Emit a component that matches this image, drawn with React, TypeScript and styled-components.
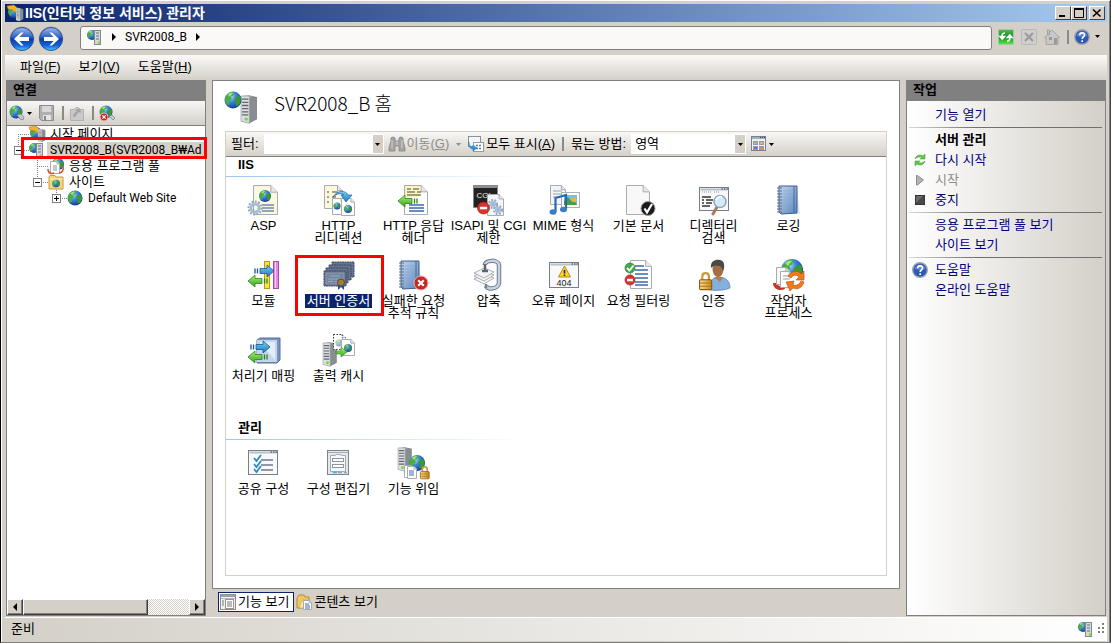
import React from "react";
import styled, { createGlobalStyle } from "styled-components";

const FACE = "#d4d0c8";
const NAVY = "#0a246a";
const RULE = "#808080";

const GlobalStyle = createGlobalStyle`
  *, *::before, *::after { box-sizing: border-box; }
  body {
    margin: 0;
    background: ${FACE};
    color: #000;
    font: 13px/16px "Liberation Sans", "Noto Sans CJK KR", sans-serif;
  }
  button, input, select { font: inherit; color: inherit; margin: 0; padding: 0; border: 0; background: none; }
  h1, h2, h3, ul { margin: 0; padding: 0; font-size: inherit; list-style: none; }
  svg { display: block; flex: none; overflow: visible; }
`;

/* ---------- drawing primitives ---------- */

const DefsSvg = styled.svg`
  position: absolute;
`;

const Defs = () => (
  <DefsSvg width="0" height="0" aria-hidden="true">
    <defs>
      <radialGradient id="sea" cx="0.35" cy="0.3" r="0.8">
        <stop offset="0" stopColor="#b8e4ff" />
        <stop offset="0.4" stopColor="#3c86dc" />
        <stop offset="1" stopColor="#0b2f8c" />
      </radialGradient>
      <linearGradient id="steel" x1="0" x2="1">
        <stop offset="0" stopColor="#e8eaec" />
        <stop offset="0.5" stopColor="#a9adb2" />
        <stop offset="1" stopColor="#5c6166" />
      </linearGradient>
      <linearGradient id="orb" x1="0" x2="0" y1="0" y2="1">
        <stop offset="0" stopColor="#9db9e6" />
        <stop offset="0.42" stopColor="#2f62c4" />
        <stop offset="0.5" stopColor="#0a3aa4" />
        <stop offset="0.8" stopColor="#1568d8" />
        <stop offset="1" stopColor="#58d0ff" />
      </linearGradient>
      <linearGradient id="rim" x1="0" x2="0" y1="0" y2="1">
        <stop offset="0" stopColor="#a8a49c" />
        <stop offset="1" stopColor="#dedbd4" />
      </linearGradient>
      <linearGradient id="green" x1="0" x2="0" y1="0" y2="1">
        <stop offset="0" stopColor="#b4ee7c" />
        <stop offset="1" stopColor="#2ca41c" />
      </linearGradient>
      <linearGradient id="blue" x1="0" x2="0" y1="0" y2="1">
        <stop offset="0" stopColor="#7cd0f8" />
        <stop offset="1" stopColor="#1678c0" />
      </linearGradient>
      <linearGradient id="gold" x1="0" x2="1">
        <stop offset="0" stopColor="#ffe08c" />
        <stop offset="1" stopColor="#c8861c" />
      </linearGradient>
      <linearGradient id="book" x1="0" x2="1" y1="0" y2="1">
        <stop offset="0" stopColor="#c2d6ee" />
        <stop offset="1" stopColor="#5a84bc" />
      </linearGradient>
      <linearGradient id="refresh" x1="0" x2="0" y1="0" y2="1">
        <stop offset="0" stopColor="#58b858" />
        <stop offset="0.5" stopColor="#109018" />
        <stop offset="1" stopColor="#50f040" />
      </linearGradient>
    </defs>
  </DefsSvg>
);

const Globe = ({ x, y, r }: { x: number; y: number; r: number }) => (
  <g transform={`translate(${x} ${y}) scale(${r / 8})`}>
    <circle r="8" fill="url(#sea)" />
    <path d="M-7-3C-5-7-1-8 1-7L0-4-2-3-1-1-4 1-3 4-5 5C-7 3-8 0-7-3Z" fill="#4cae3a" />
    <path d="M2-2 5-4 7-3C8 0 7 4 4 6L2 4 3 1 1 0Z" fill="#3a9a30" />
    <path d="M-5-5C-3-7-1-7 0-6.500L-3-3Z" fill="#b8ec9c" opacity="0.8" />
  </g>
);

const Page = ({ x, y, w, h, fill = "#fff", dash }: { x: number; y: number; w: number; h: number; fill?: string; dash?: boolean }) => {
  const f = w / 3.6;
  return (
    <g stroke={dash ? "#333" : "#a8acb0"} strokeDasharray={dash ? "1.500 1.500" : undefined}>
      <path d={`M${x} ${y}H${x + w - f}L${x + w} ${y + f}V${y + h}H${x}Z`} fill={fill} />
      <path d={`M${x + w - f} ${y}V${y + f}H${x + w}`} fill="#e8e8e8" />
    </g>
  );
};

const Tower = ({ x, y, s = 1 }: { x: number; y: number; s?: number }) => (
  <g transform={`translate(${x} ${y}) scale(${s})`}>
    <path d="M0 1 7 0 15 2V23L8 27 0 25Z" fill="url(#steel)" />
    <path d="M8 3 15 2V23L8 27Z" fill="#888d92" />
    <path d="M0 1H8V27L0 25Z" fill="#dcdfe2" stroke="#8c9196" strokeWidth="0.600" />
    <path d="M1 4H7M1 7H7M1 10H7M1 13H7M1 16H7M1 19H7" stroke="#5f656b" strokeWidth="1.200" />
    <circle cx="5" cy="23" r="1.600" fill="#74dc2c" />
  </g>
);

const Lock = ({ x, y, s = 1 }: { x: number; y: number; s?: number }) => (
  <g transform={`translate(${x} ${y}) scale(${s})`}>
    <path d="M3 7V4C3 0 9 0 9 4V7" fill="none" stroke="#c69a3c" strokeWidth="2" />
    <rect x="0.500" y="7" width="11" height="9" rx="1" fill="url(#gold)" stroke="#8a5c10" />
    <path d="M1 10H11M1 13H11" stroke="#a87420" />
  </g>
);

const ArrowR = ({ x, y }: { x: number; y: number }) => (
  <g transform={`translate(${x} ${y})`} fill="url(#blue)" stroke="#125a98" strokeWidth="0.800">
    <path d="M6 3.500H13V0L20 6 13 12V8.500H6Z" />
    <path d="M1 3.500V8.500M3.500 3.500V8.500" strokeWidth="1.300" />
  </g>
);

const ArrowL = ({ x, y }: { x: number; y: number }) => (
  <g transform={`translate(${x} ${y})`} fill="url(#green)" stroke="#27881a" strokeWidth="0.800">
    <path d="M14 3.500H7V0L0 6 7 12V8.500H14Z" />
    <path d="M16.500 3.500V8.500M19 3.500V8.500" strokeWidth="1.300" />
  </g>
);

const Gear = ({ x, y, r }: { x: number; y: number; r: number }) => (
  <g fill="none">
    <circle cx={x} cy={y} r={r} stroke="#8ba6c4" strokeWidth="2" strokeDasharray="1.800 1.500" />
    <circle cx={x} cy={y} r={r - 2} stroke="#a9c0da" strokeWidth="2.500" />
    <circle cx={x} cy={y} r={r - 3.300} stroke="#7893b4" strokeWidth="0.600" />
  </g>
);

const NoEntry = ({ x, y, r }: { x: number; y: number; r: number }) => (
  <g>
    <circle cx={x} cy={y} r={r} fill="#d8352c" stroke="#9c2018" strokeWidth="0.700" />
    <rect x={x - r * 0.6} y={y - 1.2} width={r * 1.2} height="2.500" fill="#fff" />
  </g>
);

const Cross = ({ x, y, r }: { x: number; y: number; r: number }) => (
  <g>
    <circle cx={x} cy={y} r={r} fill="#c42820" stroke="#e8b0ac" />
    <path d={`M${x - r * 0.4} ${y - r * 0.4}L${x + r * 0.4} ${y + r * 0.4}M${x + r * 0.4} ${y - r * 0.4}L${x - r * 0.4} ${y + r * 0.4}`} stroke="#fff" strokeWidth={r * 0.3} />
  </g>
);

const Notebook = ({ x, y }: { x: number; y: number }) => (
  <g transform={`translate(${x} ${y})`}>
    <path d="M3 2H20L23 29H6Z" fill="#dfe6ee" />
    <path d="M2 1H20V28L4 29 2 27Z" fill="url(#book)" stroke="#3c5f94" />
    <path d="M17 1V28" stroke="#44699e" />
    <path d="M6 6H15M6 9H15M6 12H15M6 15H15M6 18H15" stroke="#86a6d0" strokeWidth="0.700" />
    <path d="M0 3H5M0 6H5M0 9H5M0 12H5M0 15H5M0 18H5M0 21H5M0 24H5M0 27H5" stroke="#5b6e88" />
  </g>
);

const Panel = ({ x, y, w, h }: { x: number; y: number; w: number; h: number }) => (
  <g>
    <rect x={x} y={y} width={w} height={h} fill="#f8f9fa" stroke="#787f88" />
    <path d={`M${x + 1} ${y + 2}H${x + w - 1}`} stroke="#b8c0ca" strokeWidth="2" />
    <path d={`M${x + w - 7} ${y + 1.5}h1.500m1 0h1.500m1 0h1.500`} stroke="#5f6f84" strokeWidth="1.500" />
  </g>
);

const art: Record<string, React.ReactNode> = {
  asp: (
    <>
      <Page x={5.5} y={1.5} w={24} h={29} fill="#fbf8de" />
      <Globe x={17} y={12} r={6} />
      <path d="M14 21H26M14 24H26M14 27H26" stroke="#7288b0" strokeWidth="1.300" />
      <Gear x={7} y={24} r={6.5} />
    </>
  ),
  redirect: (
    <>
      <Page x={1.5} y={1.5} w={18} h={23} fill="#fbf8de" />
      <path d="M4 8H6M9 8H15M4 13H6M9 13H13M4 18H6" stroke="#8c8468" strokeWidth="1.500" />
      <Page x={9.5} y={14.5} w={12} h={16} />
      <Page x={18.5} y={14.5} w={13} h={17} />
      <Globe x={14} y={22} r={3.5} />
      <Globe x={25} y={25} r={4} />
      <path d="M10 13C14 6 23 6 25 11H29L23 18 18 11H21C19 9 14 9 10 13Z" fill="url(#blue)" stroke="#18629c" strokeWidth="0.700" />
    </>
  ),
  response: (
    <>
      <Page x={6.5} y={1.5} w={23} h={29} />
      <path d="M7 2H22V13H7Z" fill="#fbf4c4" />
      <path d="M9 5H13M15 5H21M9 8H17M19 8H23M9 11H23" stroke="#4c4c2c" strokeWidth="1.200" />
      <path d="M11 21H26M11 24H26M11 27H26" stroke="#3d68b0" strokeWidth="1.300" />
      <ArrowL x={0} y={11} />
    </>
  ),
  cgi: (
    <>
      <rect x="0.500" y="1.500" width="24" height="22" fill="#222" stroke="#888" />
      <path d="M1 3H24" stroke="#8a9098" strokeWidth="2" />
      <text x="3.500" y="14" fontSize="8" fill="#eee">CGI</text>
      <Page x={14.5} y={10.5} w={16} h={21} fill="#f4f6fa" />
      <Gear x={20} y={20} r={4} />
      <Gear x={25} y={26} r={4} />
      <NoEntry x={10.5} y={24} r={6} />
    </>
  ),
  mime: (
    <>
      <Page x={2.5} y={1.5} w={15} h={19} fill="#f2f4f7" />
      <path d="M5 7H14M5 10H14M5 13H11" stroke="#98a2ae" />
      <rect x="13.500" y="8.500" width="18" height="15" fill="#fff" stroke="#b0b0b0" />
      <rect x="16" y="11" width="13" height="10" fill="#78bcf0" />
      <path d="M16 21V17L20 13 24 18 26 16 29 21Z" fill="#48a038" />
      <path d="M23 14h5v4h-3z" fill="#e8b838" />
      <path d="M7.500 28V14L18 11V25" fill="none" stroke="#2d66b4" strokeWidth="2.200" />
      <ellipse cx="5" cy="28" rx="3.500" ry="2.800" fill="#3a7ccc" />
      <ellipse cx="15.500" cy="25.500" rx="3.500" ry="2.800" fill="#3a7ccc" />
    </>
  ),
  defaultDoc: (
    <>
      <Page x={3.5} y={1.5} w={23} h={29} fill="#f8f8f8" />
      <circle cx="25" cy="24.500" r="7" fill="#1b1b1b" stroke="#9a9a9a" />
      <path d="M21.500 24.500 24 28.500 29 20" fill="none" stroke="#fff" strokeWidth="2.200" />
    </>
  ),
  browse: (
    <>
      <Panel x={1.5} y={3.5} w={29} h={23} />
      <path d="M4 8H14M16 8H22" stroke="#8a93a0" strokeDasharray="1 1" />
      <path d="M4 13H13M4 16H6M8 16H15M4 19H6M8 19H14M4 22H12" stroke="#333" strokeWidth="1.300" />
      <path d="M19 23 15 30" stroke="#a87c5c" strokeWidth="3" strokeLinecap="round" />
      <circle cx="22" cy="17.500" r="6" fill="#d5ebfb" stroke="#8ca4bc" strokeWidth="1.500" />
      <path d="M18 16C19 13 22 12 24 13" fill="none" stroke="#fff" strokeWidth="1.500" />
    </>
  ),
  logging: <Notebook x={4} y={1} />,
  modules: (
    <>
      <rect x="16.500" y="2.500" width="5" height="27" fill="#ffe040" stroke="#b89a18" />
      <rect x="25.500" y="2.500" width="5" height="27" fill="#e48ae4" stroke="#a04ca8" />
      <path d="M27.500 3V29" stroke="#fbd0fb" />
      <ArrowR x={6} y={6} />
      <ArrowL x={0} y={16} />
    </>
  ),
  certs: (
    <>
      {[[9, 3], [6, 6], [3, 9], [1, 12]].map(([x, y]) => (
        <rect key={x} x={x} y={y} width="22" height="15" fill="#66758f" stroke="#3c4a66" strokeDasharray="2 0.500" />
      ))}
      <rect x="3" y="14" width="18" height="11" fill="#7585a0" stroke="#9aa8bc" strokeWidth="0.600" />
      <path d="M7 17H17M5 20H19M5 22.500H10M12 22.500H16" stroke="#a0aec2" strokeWidth="0.800" />
      <path d="M15 25V31L18 28 21 31V25" fill="#1c50a4" />
      <circle cx="18" cy="23.500" r="3.500" fill="#9a7c3c" stroke="#5c4a20" />
    </>
  ),
  failed: (
    <>
      <Notebook x={1} y={1} />
      <Cross x={23} y={24} r={7} />
    </>
  ),
  compress: (
    <>
      <path d="M12 6C12 1 25 0 26 6V24C25 30 15 31 13 27" fill="none" stroke="#707c88" strokeWidth="4.500" />
      <path d="M12 6C12 1 25 0 26 6V24C25 30 15 31 13 27" fill="none" stroke="#c4d4e4" strokeWidth="2.500" />
      {[20, 17, 14].map((y) => (
        <path key={y} d={`M1 ${y}L11 ${y - 5}L21 ${y - 1}L11 ${y + 5}Z`} fill="#f4f4f4" stroke="#8b9096" strokeWidth="0.700" />
      ))}
      <path d="M12 5V11M9 12H15" stroke="#5c6670" strokeWidth="2.500" />
      <path d="M13 25V29" stroke="#78828c" strokeWidth="2.500" />
    </>
  ),
  errors: (
    <>
      <Panel x={1.5} y={3.5} w={29} h={25} />
      <path d="M16.500 7 22.500 18H10.500Z" fill="#ffd428" stroke="#b48a10" strokeLinejoin="round" />
      <path d="M16.500 11V14.500M16.500 15.500V17" stroke="#222" strokeWidth="1.600" />
      <text x="8.500" y="27" fontSize="9" fill="#222">404</text>
    </>
  ),
  filtering: (
    <>
      <Page x={7.5} y={1.5} w={21} h={28} />
      <path d="M12 7H21M12 11H25M12 15H25M12 19H25M12 23H25M12 26H25" stroke="#3d68b0" strokeWidth="1.300" />
      <circle cx="7" cy="9" r="5" fill="#46a84c" stroke="#2c7c34" strokeWidth="0.700" />
      <path d="M4 9 6.500 11.500 10.500 6.500" fill="none" stroke="#fff" strokeWidth="1.800" />
      <NoEntry x={7} y={21} r={5} />
    </>
  ),
  auth: (
    <>
      <path d="M12 31C11 22 14 19 20 18 28 18 32 22 32 29 28 31 20 32 12 31Z" fill="#84b0dc" stroke="#5580b0" strokeWidth="0.700" />
      <path d="M16 18 22 23 25 18" fill="#b07c50" />
      <ellipse cx="20" cy="10" rx="5.500" ry="8" fill="#a46f44" />
      <path d="M13 9C12 1 19 0 22 1 27 2 27 8 25 12 24 8 22 6 19 7 17 6 15 7 13 9Z" fill="#4c4844" />
      <Lock x={1} y={13} s={1.1} />
    </>
  ),
  worker: (
    <>
      <Globe x={19} y={11} r={11} />
      <path d="M2 24C2 29 8 30 11 28" fill="none" stroke="#c83428" strokeWidth="4" />
      <Page x={3.5} y={8.5} w={13} h={17} fill="#f7f7f7" />
      <Page x={7.5} y={12.5} w={12} h={16} />
      <path d="M10 17H17M10 20H17" stroke="#999" />
      <circle cx="23" cy="22" r="6.500" fill="#fff" />
      <path d="M15 17C19 11 26 11 28 15L31 12V21H23L26 18C23 15 20 16 18 19Z" fill="#f07a1c" stroke="#b44c08" strokeWidth="0.600" />
      <path d="M31 23C29 29 25 31 20 29L17 32 13 23 21 22 20 26C23 27 26 26 28 22Z" fill="#f07a1c" stroke="#b44c08" strokeWidth="0.600" />
    </>
  ),
  handlers: (
    <>
      <path d="M9 6 12 4H32V26L29 29H9Z" fill="#7a94c0" stroke="#54709c" />
      <path d="M9 6H29V28H9Z" fill="#c4d4ea" />
      <path d="M11 8H27V26Z" fill="#e4ecf6" />
      <ArrowR x={2} y={7} />
      <ArrowL x={0} y={17} />
    </>
  ),
  cache: (
    <>
      <Tower x={0} y={8} s={0.9} />
      <Page x={10.5} y={0.5} w={12} h={15} dash />
      <g opacity="0.500"><Globe x={16} y={9} r={3.5} /></g>
      <Page x={18.5} y={5.5} w={13} h={16} />
      <Globe x={25} y={14} r={4} />
      <path d="M13 17H18V13L24 18 18 23V20H13Z" fill="url(#green)" stroke="#2a8c1c" strokeWidth="0.600" />
    </>
  ),
  shared: (
    <>
      <Panel x={0.5} y={3.5} w={29} h={24} />
      <path d="M13 13H25M13 18H25M13 23H25" stroke="#70788c" strokeWidth="1.300" />
      <path d="M6 11 8.500 14 13 8M6 17 8.500 20 13 14M6 22 8.500 25 13 19" fill="none" stroke="#2c8cc8" strokeWidth="1.800" />
    </>
  ),
  editor: (
    <>
      <rect x="4.500" y="3.500" width="21" height="24" fill="#e4e7ea" stroke="#7c848e" />
      <path d="M5 5.500H25" stroke="#a6adb8" />
      <path d="M7.500 11.500V8.500H12L13.500 7.500H17L18.500 8.500H22.500V24.500H7.500Z" fill="#f6f7f8" stroke="#a4abb4" />
      <rect x="9.500" y="11.500" width="11" height="3" fill="#fff" stroke="#8b94a0" />
      <rect x="9.500" y="17.500" width="11" height="3" fill="#fff" stroke="#8b94a0" />
      <path d="M10 25.500H14" stroke="#30b4ec" strokeWidth="1.500" />
      <path d="M15 25.500H19M21 25.500H24" stroke="#9aa4b0" strokeWidth="1.500" />
    </>
  ),
  delegate: (
    <>
      <Tower x={0} y={0} s={0.9} />
      <Globe x={19} y={16} r={8} />
      <Page x={6.5} y={18.5} w={9} h={12} />
      <Page x={9.5} y={19.5} w={9} h={12} />
      <path d="M11 24H16M11 26H16M11 28H16" stroke="#3d68b0" />
      <Lock x={22} y={19} s={0.8} />
    </>
  ),
  serverHome: (
    <>
      <Tower x={16} y={4} s={1.05} />
      <Globe x={8} y={9} r={8.5} />
    </>
  ),
};

const small: Record<string, React.ReactNode> = {
  iis: (
    <>
      <Globe x={7} y={7} r={6} />
      <path d="M0 1 7 0 10 3 9 8 6 5 1 4Z" fill="#f0b424" stroke="#a8700c" strokeWidth="0.500" />
      <Tower x={9} y={3} s={0.48} />
    </>
  ),
  server: (
    <>
      <Globe x={5} y={6} r={5} />
      <rect x="7.500" y="1.500" width="6" height="14" fill="#d4d8dc" stroke="#84898e" />
      <path d="M9 4H12M9 7H12M9 10H12" stroke="#686e74" />
      <circle cx="12" cy="13.500" r="1.300" fill="#7cdc30" />
    </>
  ),
  pool: (
    <>
      <Globe x={10} y={6} r={6} />
      <Page x={2.5} y={3.5} w={9} h={12} />
      <path d="M5 8H9M5 10H9M5 12H9" stroke="#8a9098" />
      <path d="M0 11C0 16 4 16 6 15M15 8C16 12 14 15 11 15" fill="none" stroke="#d05030" strokeWidth="1.500" />
    </>
  ),
  sites: (
    <>
      <path d="M1 3 2 1.500H7L8 3H15V15H1Z" fill="#f6d47c" stroke="#c69a3c" />
      <path d="M1.500 5H14.500" stroke="#fff2bc" />
      <Globe x={8} y={9.5} r={3.8} />
    </>
  ),
  globe: <Globe x={8} y={8} r={7.5} />,
  connect: (
    <>
      <Globe x={7} y={7} r={6.5} />
      <path d="M8 10 12 9 15 12 14 15 11 14Z" fill="#c4cace" stroke="#787e84" strokeWidth="0.700" />
    </>
  ),
  disconnect: (
    <>
      <Globe x={7} y={7} r={6.5} />
      <path d="M10 11 13 10 16 13 14 15Z" fill="#c4cace" stroke="#787e84" strokeWidth="0.700" />
      <Cross x={5} y={12} r={4} />
    </>
  ),
  save: (
    <>
      <path d="M0.500 0.500H14.500V15.500H2.500L0.500 13.500Z" fill="#b0b0b0" stroke="#8c8c8c" />
      <rect x="3" y="1" width="9" height="6" fill="#d8d8d8" />
      <rect x="4" y="10" width="8" height="5" fill="#e4e4e4" />
      <rect x="5" y="11" width="2" height="4" fill="#888" />
    </>
  ),
  up: (
    <>
      <path d="M1.500 4.500H5L7 2.500H9V4.500H14.500V15.500H1.500Z" fill="#cacaca" stroke="#b0b0b0" />
      <path d="M4 12C4 9 6 8 8 6L6 5 11 3 12 8 10 7C8 9 7 10 6 12" fill="#a4a4a4" />
    </>
  ),
  refresh: (
    <>
      <rect x="0.500" y="0.500" width="15" height="15" rx="1" fill="url(#refresh)" stroke="#a8c4a8" />
      <path d="M7 4C4 4 4 6 4 9M2 7.500H6.500L4.200 10ZM9 12C12 12 12 10 12 7M9.500 8.500H14L11.800 6Z" fill="none" stroke="#fff" strokeWidth="1.600" />
    </>
  ),
  stop: (
    <>
      <rect x="0.500" y="0.500" width="15" height="15" rx="1" fill="#cecece" stroke="#b8b8b8" />
      <path d="M4 4 12 12M12 4 4 12" stroke="#9c9c9c" strokeWidth="2.200" />
    </>
  ),
  home: (
    <>
      <path d="M3.500 1V6H5.500V1ZM0.500 8.500 8 1 15.500 8.500H14V15.500H2V8.500Z" fill="#c8c8c8" stroke="#a4a4a4" />
      <rect x="5" y="8" width="3" height="3" fill="#999" />
      <rect x="10" y="9" width="3" height="6" fill="#999" />
    </>
  ),
  help: (
    <>
      <circle cx="8" cy="8" r="7.300" fill="#2c58b8" stroke="#a0a4ac" strokeWidth="1.400" />
      <path d="M2.500 7C3 1 13 1 13.500 7 10 8.500 6 8.500 2.500 7Z" fill="#7898dc" opacity="0.600" />
      <path d="M5.700 6.300C5.700 3 10.500 3 10.500 6 10.500 8 8.200 7.800 8.200 10M8.200 11.300V13" fill="none" stroke="#fff" strokeWidth="1.700" />
    </>
  ),
  binoculars: (
    <>
      <path d="M2 5V2Q4 0 6 2V5H10V2Q12 0 14 2V5L16 12V15H10V10H6V15H0V12Z" fill="#a4a4a4" stroke="#8e8e8e" />
      <path d="M3 4V12M13 4V12M8 5V9" stroke="#d0d0d0" />
    </>
  ),
  showAll: (
    <>
      <rect x="0.500" y="0.500" width="12" height="10" fill="#f4f6f8" stroke="#8a929e" />
      <rect x="5.500" y="6.500" width="10" height="9" fill="#fff" stroke="#9098a8" />
      <path d="M8 9.500H10M11 9.500H13M8 12.500H10M11 12.500H13" stroke="#5474b8" strokeWidth="1.600" />
      <path d="M1 6C1 10 3 11 5 11V9L9 12 5 15V13C2 13 0 10 1 6Z" fill="url(#blue)" stroke="#1a70b4" strokeWidth="0.500" />
    </>
  ),
  views: (
    <>
      <rect x="0.500" y="0.500" width="14" height="14" fill="#f0f1f3" stroke="#76808e" />
      <path d="M1 2H14" stroke="#a4aebc" strokeWidth="2" />
      <path d="M9 1.500H10M11 1.500H12M13 1.500H14" stroke="#445" />
      <rect x="2.500" y="5.500" width="4" height="3" fill="#8cc88c" stroke="#99a" />
      <rect x="8.500" y="5.500" width="4" height="3" fill="#e0b85c" stroke="#99a" />
      <rect x="2.500" y="10.500" width="4" height="3" fill="#5474ec" stroke="#99a" />
      <rect x="8.500" y="10.500" width="4" height="3" fill="#f08060" stroke="#99a" />
    </>
  ),
  restart: (
    <>
      <path d="M3 7C4 3 8 2 11 4L13 2V7H8L10 5.500C8 4.500 5 5 3 7Z" fill="#5cc840" stroke="#3c9c30" strokeWidth="0.500" />
      <path d="M13 9C12 13 8 14 5 12L3 14V9H8L6 10.500C8 11.500 11 11 13 9Z" fill="#5cc840" stroke="#3c9c30" strokeWidth="0.500" />
    </>
  ),
  start: <path d="M5.500 3.500 11.500 8 5.500 13H4.500V3.500Z" fill="#b4b4b4" stroke="#8c8c8c" />,
  halt: (
    <>
      <rect x="3.500" y="3.500" width="9" height="9" fill="#484848" stroke="#343434" />
      <path d="M4 11 11 4H4Z" fill="#6a6a6a" />
    </>
  ),
  features: (
    <>
      <rect x="0.500" y="0.500" width="15" height="15" fill="#f0f0f0" stroke="#888f98" />
      <path d="M1 2H15" stroke="#98a2b0" strokeWidth="2" />
      <path d="M1 4.500H15" stroke="#b8bcc2" />
      <rect x="5.500" y="5.500" width="8" height="9" fill="#fff" stroke="#9a948c" />
      <path d="M7 8H12M7 10H12M7 12H12M2 7H4M2 9H4M2 11H4" stroke="#7a7670" />
    </>
  ),
  content: (
    <>
      <path d="M1 4 3 1H8L9 3H13V14H1Z" fill="#f0c868" stroke="#b48c34" />
      <path d="M3 14 6 6H14L11 14Z" fill="#ffe49c" stroke="#c8a04c" strokeWidth="0.600" />
      <Page x={7.5} y={6.5} w={8} h={9} />
      <path d="M9 10H13M9 12H14M9 14H14" stroke="#3d68b0" />
    </>
  ),
};

const Art = ({ name }: { name: string }) => (
  <svg width="32" height="32" viewBox="0 0 32 32" aria-hidden="true">{art[name]}</svg>
);
const Icon = ({ name }: { name: string }) => (
  <svg width="16" height="16" viewBox="0 0 16 16" aria-hidden="true">{small[name]}</svg>
);
const Caret = ({ color = "#000" }: { color?: string }) => (
  <svg width="5" height="3" viewBox="0 0 5 3" aria-hidden="true"><path d="M0 0H5L2.500 3Z" fill={color} /></svg>
);
const Chevron = ({ left }: { left?: boolean }) => (
  <svg width="4" height="8" viewBox="0 0 4 8" aria-hidden="true"><path d={left ? "M4 0V8L0 4Z" : "M0 0V8L4 4Z"} fill="#000" /></svg>
);

/* ---------- window chrome ---------- */

const Window = styled.div`
  display: flex;
  flex-direction: column;
  min-height: 100vh;
  padding: 4px 3px 1px 4px;
  background: ${FACE};
  border-left: 1px solid #000;
  border-right: 1px solid #404040;
  border-bottom: 1px solid ${RULE};
  box-shadow: inset 2px 2px 0 -1px #fff, inset -1px 0 0 ${RULE};
`;

const TitleBar = styled.header`
  display: flex;
  align-items: center;
  gap: 2px;
  height: 18px;
  padding: 0 2px;
  background: linear-gradient(90deg, ${NAVY}, #a6caf0);
  color: #fff;
`;
const Title = styled.h1`
  flex: 1;
  font-size: 14px;
  font-weight: bold;
  white-space: nowrap;
`;
const CaptionButton = styled.button<{ $joined?: boolean }>`
  display: grid;
  place-items: center;
  width: 16px;
  height: 14px;
  margin-left: ${(p) => (p.$joined ? -2 : 0)}px;
  background: ${FACE};
  border: 1px solid;
  border-color: #fff #404040 #404040 #fff;
`;

const NavRow = styled.div`
  display: flex;
  align-items: center;
  height: 33px;
  padding: 0 7px 0 4px;
`;
const NavButton = styled.button`
  display: block;
  margin-right: 3px;
`;
const AddressBar = styled.nav`
  display: flex;
  flex: 1;
  align-items: center;
  gap: 9px;
  height: 24px;
  margin: 0 6px 2px 13px;
  padding: 0 6px 2px;
  background: #faf9f7;
  border: 1px solid ${RULE};
  border-radius: 3px;
  font-family: Roboto, "Noto Sans CJK KR", sans-serif;
  font-size: 12px;
`;
const NavTools = styled.div`
  display: flex;
  align-items: center;
  gap: 7px;
  margin-bottom: 4px;
`;
const Cluster = styled.span`
  display: flex;
  align-items: center;
  gap: 5px;
`;
const IconButton = styled.button`
  display: flex;
  align-items: center;
  gap: 2px;
  white-space: nowrap;
  &:disabled { color: #8c8c8c; }
`;
const Divider = styled.span`
  width: 2px;
  height: 14px;
  background: #8c8a86;
`;

const MenuBar = styled.nav`
  display: flex;
  align-items: center;
  gap: 18px;
  height: 25px;
  padding: 0 15px 2px;
  background: linear-gradient(#fbfaf8, ${FACE});
`;

/* ---------- panes ---------- */

const Body = styled.main`
  display: flex;
  flex: 1;
  gap: 6px;
  padding: 0 1px;
`;
const Pane = styled.section`
  display: flex;
  flex: none;
  flex-direction: column;
  width: 200px;
  border: 1px solid ${RULE};
  background: #fff;
`;
const ActionsPane = styled(Pane)`
  background: linear-gradient(90deg, #fff, ${FACE});
`;
const PaneTitle = styled.h2`
  flex: none;
  height: 20px;
  padding: 1px 6px;
  background: ${RULE};
  font-weight: bold;
`;
const PaneTools = styled.div`
  display: flex;
  align-items: center;
  gap: 7px;
  height: 25px;
  padding: 0 2px;
  background: linear-gradient(#f8f7f5, ${FACE});
  border-bottom: 1px solid ${RULE};
`;

const Tree = styled.ul`
  flex: 1;
  padding-left: 2px;
`;
const TreeRow = styled.li<{ $level: number }>`
  position: relative;
  display: flex;
  height: 16px;
  padding-left: ${(p) => p.$level * 19}px;
`;
const TreeLabel = styled.button<{ $selected?: boolean; $latin?: boolean }>`
  flex: ${(p) => (p.$selected ? "1" : "none")};
  min-width: 0;
  margin-left: 2px;
  padding: 0 0 0 3px;
  background: ${(p) => (p.$selected ? FACE : "none")};
  font-family: ${(p) => (p.$latin ? 'Roboto, "Noto Sans CJK KR", sans-serif' : "inherit")};
  font-size: ${(p) => (p.$latin ? 12 : 13)}px;
  text-align: left;
  white-space: nowrap;
`;
const TreeMark = styled.span`
  position: absolute;
  z-index: 1;
  inset: -5px -2px -1px 12px;
  border: 3px solid #f00;
`;

const ScrollBar = styled.div`
  display: flex;
  height: 16px;
  background: repeating-conic-gradient(#fff 0 25%, ${FACE} 0 50%) 0 0 / 2px 2px;
`;
const ScrollButton = styled.button`
  display: grid;
  place-items: center;
  width: 16px;
  background: ${FACE};
  border: 1px solid;
  border-color: #fff #404040 #404040 #fff;
  box-shadow: inset -1px -1px 0 ${RULE};
`;
const ScrollThumb = styled.div`
  width: 75%;
  background: ${FACE};
  border: 1px solid;
  border-color: #fff #404040 #404040 #fff;
  box-shadow: inset -1px -1px 0 ${RULE};
`;
const ScrollTrack = styled.div`
  flex: 1;
  display: flex;
`;

/* ---------- centre ---------- */

const Centre = styled.section`
  display: flex;
  flex: 1;
  flex-direction: column;
  min-width: 0;
`;
const Sheet = styled.div`
  display: flex;
  flex: 1;
  flex-direction: column;
  padding: 10px 12px 12px;
  background: #fff;
  border: 1px solid ${RULE};
`;
const SheetHead = styled.div`
  display: flex;
  gap: 17px;
  height: 40px;
`;
const SheetTitle = styled.h2`
  font: 300 19px/24px "Noto Sans CJK KR", sans-serif;
`;
const FeatureBox = styled.div`
  flex: 1;
  border: 1px solid ${FACE};
`;
const FilterBar = styled.div`
  display: flex;
  align-items: center;
  gap: 5px;
  height: 25px;
  padding: 0 5px;
  background: linear-gradient(#f8f7f5, ${FACE});
  border-bottom: 1px solid ${RULE};
  white-space: nowrap;
`;
const FilterItem = styled.span`
  display: flex;
  padding: 0 2px;
`;
const Combo = styled.div<{ $width: number }>`
  display: flex;
  width: ${(p) => p.$width}px;
  height: 20px;
  padding: 1px 1px 1px 0;
  background: #fff;
`;
const ComboInput = styled.input`
  flex: 1;
  min-width: 0;
  padding-left: 4px;
  outline: 0;
`;
const ComboSelect = styled.select`
  flex: 1;
  padding-left: 4px;
  appearance: none;
  outline: 0;
`;
const ComboArrow = styled.span`
  display: grid;
  place-items: center;
  width: 10px;
  background: ${FACE};
`;
const GroupTitle = styled.h3`
  height: 20px;
  padding: 0 12px;
  border-bottom: 1px solid;
  border-image: linear-gradient(90deg, #9ac8f0, #9ac8f000 300px) 1;
`;
const Grid = styled.div`
  display: grid;
  grid-template-columns: repeat(auto-fill, 75px);
  grid-auto-rows: 75px;
  padding-top: 7px;
  margin-bottom: 11px;
`;
const Tile = styled.button`
  position: relative;
  display: flex;
  flex-direction: column;
  align-items: center;
  gap: 3px;
  line-height: 12px;
`;
const TileLabel = styled.span<{ $selected?: boolean }>`
  padding: 1px 2px;
  background: ${(p) => (p.$selected ? NAVY : "none")};
  color: ${(p) => (p.$selected ? "#fff" : "inherit")};
  white-space: pre;
`;
const TileMark = styled.span`
  position: absolute;
  inset: -4px -8px 18px -6px;
  border: 3px solid #f00;
`;
const Tabs = styled.div`
  display: flex;
  align-items: center;
  height: 27px;
  padding: 0 0 2px 6px;
`;
const Tab = styled.button<{ $active?: boolean }>`
  display: flex;
  align-items: center;
  gap: 2px;
  height: 20px;
  padding: 0 4px 0 1px;
  border: 1px solid ${(p) => (p.$active ? NAVY : "transparent")};
  background: ${(p) => (p.$active ? "#fff" : "none")};
`;

/* ---------- actions ---------- */

const ActionList = styled.div`
  padding: 3px 3px 0 2px;
`;
const ActionRow = styled.div`
  display: flex;
  align-items: center;
  gap: 7px;
  height: 20px;
  padding: 1px 0 0 3px;
`;
const ActionSlot = styled.span`
  width: 16px;
  height: 16px;
`;
const ActionLink = styled.a`
  color: #000080;
  text-decoration: none;
`;
const ActionOff = styled.span`
  color: #8c8c8c;
`;
const ActionRule = styled.div`
  height: 5px;
  padding-top: 3px;
  &::after {
    content: "";
    display: block;
    height: 1px;
    background: linear-gradient(90deg, #d8d8d8, #707070 35%);
  }
`;

const StatusBar = styled.footer`
  display: flex;
  align-items: center;
  gap: 3px;
  height: 24px;
  margin-top: 1px;
  padding: 0 2px 1px 6px;
  border-top: 1px solid #fff;
  background: linear-gradient(90deg, ${FACE}, #fff);
`;
const StatusText = styled.span`
  flex: 1;
`;

/* ---------- content ---------- */

type Feature = [icon: string, label: string];
const iisFeatures: Feature[] = [
  ["asp", "ASP"], ["redirect", "HTTP\n리디렉션"], ["response", "HTTP 응답\n헤더"], ["cgi", "ISAPI 및 CGI\n제한"],
  ["mime", "MIME 형식"], ["defaultDoc", "기본 문서"], ["browse", "디렉터리\n검색"], ["logging", "로깅"],
  ["modules", "모듈"], ["certs", "서버 인증서"], ["failed", "실패한 요청\n추적 규칙"], ["compress", "압축"],
  ["errors", "오류 페이지"], ["filtering", "요청 필터링"], ["auth", "인증"], ["worker", "작업자\n프로세스"],
  ["handlers", "처리기 매핑"], ["cache", "출력 캐시"],
];
const manageFeatures: Feature[] = [["shared", "공유 구성"], ["editor", "구성 편집기"], ["delegate", "기능 위임"]];

const FeatureGrid = ({ items, selected }: { items: Feature[]; selected?: string }) => (
  <Grid>
    {items.map(([icon, label]) => (
      <Tile key={icon} type="button">
        <Art name={icon} />
        <TileLabel $selected={icon === selected}>{label}</TileLabel>
        {icon === selected && <TileMark />}
      </Tile>
    ))}
  </Grid>
);

const Branch = ({ lines, sign }: { lines: string; sign?: "+" | "-" }) => (
  <svg width="20" height="16" viewBox="0 0 20 16" aria-hidden="true">
    <path d={lines} stroke="#808080" strokeDasharray="1 1" />
    {sign && (
      <>
        <rect x="5.500" y="4.500" width="8" height="8" fill="#fff" stroke="#808080" />
        <path d={sign === "+" ? "M7 8.500H12M9.500 6V11" : "M7 8.500H12"} stroke="#000" />
      </>
    )}
  </svg>
);

type Node = { icon: string; label: string; level: number; lines: string; sign?: "+" | "-"; selected?: boolean; latin?: boolean };
const nodes: Node[] = [
  { icon: "iis", label: "시작 페이지", level: 0, lines: "M9.500 8V16M9 8.500H20" },
  { icon: "server", label: "SVR2008_B(SVR2008_B₩Ad", level: 0, lines: "M9.500 0V8M9 8.500H20", sign: "-", selected: true, latin: true },
  { icon: "pool", label: "응용 프로그램 풀", level: 1, lines: "M9.500 0V16M9 8.500H20" },
  { icon: "sites", label: "사이트", level: 1, lines: "M9.500 0V8M9 8.500H20", sign: "-" },
  { icon: "globe", label: "Default Web Site", level: 2, lines: "M9.500 0V8M9 8.500H20", sign: "+", latin: true },
];

const Action = ({ icon, children, off }: { icon?: string; children: React.ReactNode; off?: boolean }) => (
  <ActionRow>
    {icon ? <Icon name={icon} /> : <ActionSlot />}
    {off ? <ActionOff>{children}</ActionOff> : <ActionLink href="#">{children}</ActionLink>}
  </ActionRow>
);

const Orb = ({ back }: { back?: boolean }) => (
  <svg width="26" height="26" viewBox="0 0 26 26" aria-hidden="true">
    <circle cx="13" cy="13" r="12.500" fill="url(#rim)" />
    <circle cx="13" cy="13" r="11.500" fill="url(#orb)" stroke="#24509c" />
    <path
      d={back ? "M5 13 12 6.500H14.500L10.500 11H20V15H10.500L14.500 19.500H12Z" : "M21 13 14 6.500H11.500L15.500 11H6V15H15.500L11.500 19.500H14Z"}
      fill="#fff"
    />
  </svg>
);

export default function App() {
  return (
    <Window>
      <GlobalStyle />
      <Defs />
      <TitleBar>
        <Icon name="iis" />
        <Title>IIS(인터넷 정보 서비스) 관리자</Title>
        <CaptionButton type="button" aria-label="최소화">
          <svg width="10" height="10" viewBox="0 0 10 10"><path d="M1 8H7" stroke="#000" strokeWidth="2" /></svg>
        </CaptionButton>
        <CaptionButton type="button" aria-label="최대화" $joined>
          <svg width="10" height="10" viewBox="0 0 10 10"><path d="M0.500 1V9.500H9.500V1" fill="none" stroke="#000" /><path d="M0 1H10" stroke="#000" strokeWidth="2" /></svg>
        </CaptionButton>
        <CaptionButton type="button" aria-label="닫기">
          <svg width="10" height="10" viewBox="0 0 10 10"><path d="M1 1.500 8.500 8.500M8.500 1.500 1 8.500" stroke="#000" strokeWidth="1.600" /></svg>
        </CaptionButton>
      </TitleBar>

      <NavRow>
        <NavButton type="button" aria-label="뒤로"><Orb back /></NavButton>
        <NavButton type="button" aria-label="앞으로"><Orb /></NavButton>
        <AddressBar aria-label="주소">
          <Icon name="server" />
          <Chevron />
          <span>SVR2008_B</span>
          <Chevron />
        </AddressBar>
        <NavTools>
          <IconButton type="button" aria-label="새로 고침"><Icon name="refresh" /></IconButton>
          <IconButton type="button" aria-label="중지" disabled><Icon name="stop" /></IconButton>
          <IconButton type="button" aria-label="홈" disabled><Icon name="home" /></IconButton>
          <Cluster>
            <Divider />
            <IconButton type="button" aria-label="도움말"><Icon name="help" /></IconButton>
            <Caret />
          </Cluster>
        </NavTools>
      </NavRow>

      <MenuBar>
        <button type="button">파일(<u>F</u>)</button>
        <button type="button">보기(<u>V</u>)</button>
        <button type="button">도움말(<u>H</u>)</button>
      </MenuBar>

      <Body>
        <Pane>
          <PaneTitle>연결</PaneTitle>
          <PaneTools>
            <IconButton type="button" aria-label="연결 만들기"><Icon name="connect" /><Caret /></IconButton>
            <IconButton type="button" aria-label="저장" disabled><Icon name="save" /></IconButton>
            <Cluster>
              <Divider />
              <IconButton type="button" aria-label="위로" disabled><Icon name="up" /></IconButton>
            </Cluster>
            <Cluster>
              <Divider />
              <IconButton type="button" aria-label="연결 제거"><Icon name="disconnect" /></IconButton>
            </Cluster>
          </PaneTools>
          <Tree>
            {nodes.map((n) => (
              <TreeRow key={n.label} $level={n.level}>
                <Branch lines={n.lines} sign={n.sign} />
                <Icon name={n.icon} />
                <TreeLabel type="button" $selected={n.selected} $latin={n.latin}>{n.label}</TreeLabel>
                {n.selected && <TreeMark />}
              </TreeRow>
            ))}
          </Tree>
          <ScrollBar>
            <ScrollButton type="button" aria-label="왼쪽"><Chevron left /></ScrollButton>
            <ScrollTrack><ScrollThumb /></ScrollTrack>
            <ScrollButton type="button" aria-label="오른쪽"><Chevron /></ScrollButton>
          </ScrollBar>
        </Pane>

        <Centre>
          <Sheet>
            <SheetHead>
              <Art name="serverHome" />
              <SheetTitle>SVR2008_B 홈</SheetTitle>
            </SheetHead>
            <FeatureBox>
              <FilterBar>
                <label htmlFor="filter">필터:</label>
                <Combo $width={120}>
                  <ComboInput id="filter" type="text" />
                  <ComboArrow><Caret /></ComboArrow>
                </Combo>
                <IconButton type="button" disabled><Icon name="binoculars" /><span>이동(<u>G</u>)</span></IconButton>
                <FilterItem><Caret color="#8c8c8c" /></FilterItem>
                <IconButton type="button"><Icon name="showAll" /><span>모두 표시(<u>A</u>)</span></IconButton>
                <FilterItem><Divider /></FilterItem>
                <label htmlFor="group">묶는 방법:</label>
                <Combo $width={115}>
                  <ComboSelect id="group"><option>영역</option></ComboSelect>
                  <ComboArrow><Caret /></ComboArrow>
                </Combo>
                <IconButton type="button" aria-label="보기"><Icon name="views" /><Caret /></IconButton>
              </FilterBar>
              <GroupTitle>IIS</GroupTitle>
              <FeatureGrid items={iisFeatures} selected="certs" />
              <GroupTitle>관리</GroupTitle>
              <FeatureGrid items={manageFeatures} />
            </FeatureBox>
          </Sheet>
          <Tabs>
            <Tab type="button" $active><Icon name="features" />기능 보기</Tab>
            <Tab type="button"><Icon name="content" />콘텐츠 보기</Tab>
          </Tabs>
        </Centre>

        <ActionsPane>
          <PaneTitle>작업</PaneTitle>
          <ActionList>
            <Action>기능 열기</Action>
            <ActionRule />
            <ActionRow><ActionSlot /><h3>서버 관리</h3></ActionRow>
            <Action icon="restart">다시 시작</Action>
            <Action icon="start" off>시작</Action>
            <Action icon="halt">중지</Action>
            <ActionRule />
            <Action>응용 프로그램 풀 보기</Action>
            <Action>사이트 보기</Action>
            <ActionRule />
            <Action icon="help">도움말</Action>
            <Action>온라인 도움말</Action>
          </ActionList>
        </ActionsPane>
      </Body>

      <StatusBar>
        <StatusText>준비</StatusText>
        <Icon name="server" />
        <svg width="8" height="12" viewBox="0 0 8 12" aria-hidden="true">
          <path d="M5 1H7M5 5H7M1 5H3M5 9H7M1 9H3" stroke="#808080" strokeWidth="2" />
        </svg>
      </StatusBar>
    </Window>
  );
}
